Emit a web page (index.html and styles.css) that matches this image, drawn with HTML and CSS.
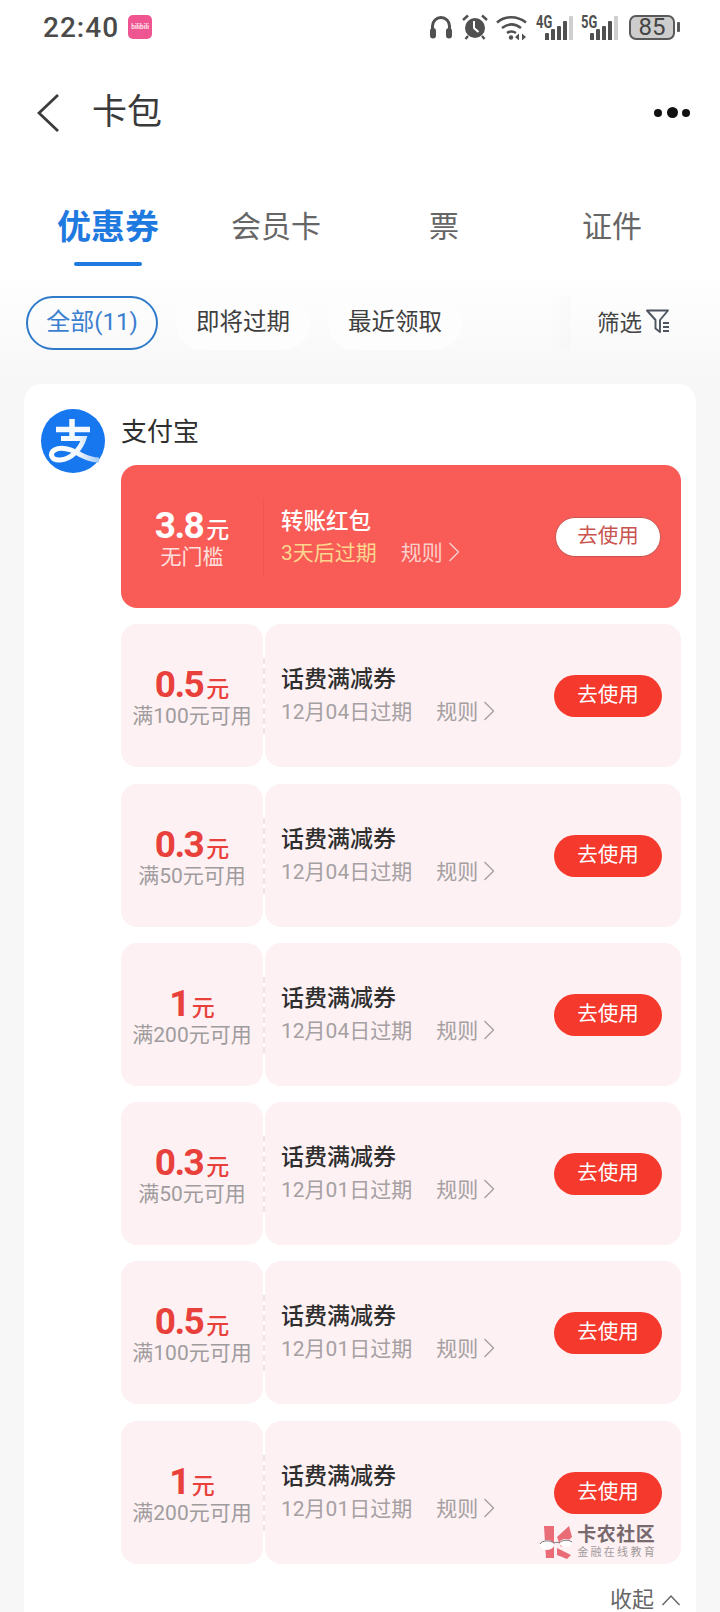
FILE: index.html
```html
<!DOCTYPE html>
<html lang="zh-CN">
<head>
    <meta charset="UTF-8">
    <meta name="viewport" content="width=device-width, initial-scale=1.0">
    <title>卡包</title>
    <link rel="stylesheet" href="styles.css">
</head>
<body>
<div class="page">
    <div class="status-bar">
        <div class="status-left">
            <span class="clock">22:40</span>
            <span class="app-badge">bilibili</span>
        </div>
        <div class="status-right">
            <svg class="st-headphones" viewBox="0 0 24 24">
                <path d="M3.5 15V11a8.5 8.5 0 0 1 17 0v4" fill="none" stroke="#505050" stroke-width="3"/>
                <rect x="1" y="13" width="6" height="10.5" rx="3" fill="#505050"/>
                <rect x="17" y="13" width="6" height="10.5" rx="3" fill="#505050"/>
            </svg>
            <svg class="st-alarm" viewBox="0 0 26 26">
                <circle cx="13" cy="14" r="10" fill="#505050"/>
                <path d="M1 6l5-4.5M25 6l-5-4.5M6 22l-2.5 3M20 22l2.5 3" stroke="#505050" stroke-width="2.4" fill="none"/>
                <path d="M12 7v7l4.5 4" stroke="#fff" stroke-width="2" fill="none"/>
            </svg>
            <svg class="st-wifi" viewBox="0 0 32 26">
                <path d="M1 8.5C9 1.5 21 1.5 30 8.5M6 14c6-4.5 13-4.5 19 0M11 19c3-2 6-2 9 0" fill="none" stroke="#505050" stroke-width="2.6"/>
                <circle cx="15" cy="23.5" r="2.2" fill="#505050"/>
                <path d="M19 23l4-3.5v7zM26 19.5l4 3.5-4 3.5z" fill="#505050"/>
            </svg>
            <div class="signal">
                <span class="net-type">4G</span>
                <i class="bar b1"></i><i class="bar b2"></i><i class="bar b3"></i><i class="bar b4"></i><i class="bar b5"></i>
            </div>
            <div class="signal">
                <span class="net-type">5G</span>
                <i class="bar b1"></i><i class="bar b2"></i><i class="bar b3"></i><i class="bar b4"></i><i class="bar b5"></i>
            </div>
            <div class="battery">
                <div class="battery-body">85</div>
                <div class="battery-tip"></div>
            </div>
        </div>
    </div>

    <div class="nav-bar">
        <div class="nav-left">
            <svg class="back-icon" viewBox="0 0 22 38">
                <path d="M21 1L2 19l19 18" fill="none" stroke="#3c3c3c" stroke-width="2.8"/>
            </svg>
            <span class="nav-title">卡包</span>
        </div>
        <div class="more"><i></i><i class="mid"></i><i></i></div>
    </div>

    <div class="tabs">
        <div class="tab active">优惠券</div>
        <div class="tab">会员卡</div>
        <div class="tab">票</div>
        <div class="tab">证件</div>
    </div>

    <div class="filters">
        <div class="chip selected">全部(11)</div>
        <div class="chip">即将过期</div>
        <div class="chip">最近领取</div>
        <div class="filter-btn">
            <span>筛选</span>
            <svg class="funnel" viewBox="0 0 26 26">
                <path d="M2 2.5h21l-8 9.5v12l-4.5-3.5V12z" fill="none" stroke="#4d5560" stroke-width="1.9" stroke-linejoin="round"/>
                <path d="M18 15h6M18 19h6M18 23h6" stroke="#4d5560" stroke-width="1.8"/>
            </svg>
        </div>
    </div>

    <div class="card">
        <svg class="brand-logo" viewBox="0 0 64 64">
            <defs>
                <linearGradient id="ribbon" gradientUnits="userSpaceOnUse" x1="8" y1="0" x2="60" y2="0">
                    <stop offset="0" stop-color="#ffffff"/>
                    <stop offset="0.55" stop-color="#f2f8ff"/>
                    <stop offset="1" stop-color="#9cc6f5"/>
                </linearGradient>
            </defs>
            <circle cx="32" cy="32" r="32" fill="#1677ee"/>
            <path d="M15 20.5h34M31 10v17" stroke="#f4f9ff" stroke-width="5.5" fill="none"/>
            <path d="M20 29.5h23C40 39 31 50 19 51 10 51.5 8 44 13.5 41 20 37.5 30 40 40 46c6 3 12 5 18 5" fill="none" stroke="url(#ribbon)" stroke-width="5"/>
        </svg>
        <div class="card-main">
            <div class="brand-name">支付宝</div>

            <div class="coupon coupon-red">
                <div class="coupon-value">
                    <div class="amount">3.8<small>元</small></div>
                    <div class="limit">无门槛</div>
                </div>
                <div class="coupon-info">
                    <div class="coupon-title">转账红包</div>
                    <div class="coupon-meta">
                        <span class="expire">3天后过期</span>
                        <span class="rule">规则</span>
                        <svg class="rule-arrow" viewBox="0 0 12 20"><path d="M1.5 1L10.5 10l-9 9" fill="none" stroke="currentColor" stroke-width="1.4"/></svg>
                    </div>
                </div>
                <div class="use-btn">去使用</div>
            </div>

            <div class="coupon">
                <div class="coupon-value">
                    <div class="amount">0.5<small>元</small></div>
                    <div class="limit">满100元可用</div>
                </div>
                <div class="coupon-info">
                    <div class="coupon-title">话费满减券</div>
                    <div class="coupon-meta">
                        <span class="expire">12月04日过期</span>
                        <span class="rule">规则</span>
                        <svg class="rule-arrow" viewBox="0 0 12 20"><path d="M1.5 1L10.5 10l-9 9" fill="none" stroke="currentColor" stroke-width="1.4"/></svg>
                    </div>
                </div>
                <div class="use-btn">去使用</div>
            </div>

            <div class="coupon">
                <div class="coupon-value">
                    <div class="amount">0.3<small>元</small></div>
                    <div class="limit">满50元可用</div>
                </div>
                <div class="coupon-info">
                    <div class="coupon-title">话费满减券</div>
                    <div class="coupon-meta">
                        <span class="expire">12月04日过期</span>
                        <span class="rule">规则</span>
                        <svg class="rule-arrow" viewBox="0 0 12 20"><path d="M1.5 1L10.5 10l-9 9" fill="none" stroke="currentColor" stroke-width="1.4"/></svg>
                    </div>
                </div>
                <div class="use-btn">去使用</div>
            </div>

            <div class="coupon">
                <div class="coupon-value">
                    <div class="amount">1<small>元</small></div>
                    <div class="limit">满200元可用</div>
                </div>
                <div class="coupon-info">
                    <div class="coupon-title">话费满减券</div>
                    <div class="coupon-meta">
                        <span class="expire">12月04日过期</span>
                        <span class="rule">规则</span>
                        <svg class="rule-arrow" viewBox="0 0 12 20"><path d="M1.5 1L10.5 10l-9 9" fill="none" stroke="currentColor" stroke-width="1.4"/></svg>
                    </div>
                </div>
                <div class="use-btn">去使用</div>
            </div>

            <div class="coupon">
                <div class="coupon-value">
                    <div class="amount">0.3<small>元</small></div>
                    <div class="limit">满50元可用</div>
                </div>
                <div class="coupon-info">
                    <div class="coupon-title">话费满减券</div>
                    <div class="coupon-meta">
                        <span class="expire">12月01日过期</span>
                        <span class="rule">规则</span>
                        <svg class="rule-arrow" viewBox="0 0 12 20"><path d="M1.5 1L10.5 10l-9 9" fill="none" stroke="currentColor" stroke-width="1.4"/></svg>
                    </div>
                </div>
                <div class="use-btn">去使用</div>
            </div>

            <div class="coupon">
                <div class="coupon-value">
                    <div class="amount">0.5<small>元</small></div>
                    <div class="limit">满100元可用</div>
                </div>
                <div class="coupon-info">
                    <div class="coupon-title">话费满减券</div>
                    <div class="coupon-meta">
                        <span class="expire">12月01日过期</span>
                        <span class="rule">规则</span>
                        <svg class="rule-arrow" viewBox="0 0 12 20"><path d="M1.5 1L10.5 10l-9 9" fill="none" stroke="currentColor" stroke-width="1.4"/></svg>
                    </div>
                </div>
                <div class="use-btn">去使用</div>
            </div>

            <div class="coupon">
                <div class="coupon-value">
                    <div class="amount">1<small>元</small></div>
                    <div class="limit">满200元可用</div>
                </div>
                <div class="coupon-info">
                    <div class="coupon-title">话费满减券</div>
                    <div class="coupon-meta">
                        <span class="expire">12月01日过期</span>
                        <span class="rule">规则</span>
                        <svg class="rule-arrow" viewBox="0 0 12 20"><path d="M1.5 1L10.5 10l-9 9" fill="none" stroke="currentColor" stroke-width="1.4"/></svg>
                    </div>
                </div>
                <div class="use-btn">去使用</div>
                <div class="watermark">
                    <svg class="watermark-logo" viewBox="0 0 34 34">
                        <path d="M5 1h10v32H7zM18 12L30 1l3 11-11 10zM18 23l14 7-4 4-10-4z" fill="#e96c76"/>
                        <ellipse cx="8" cy="20" rx="7" ry="5" fill="#fff"/>
                        <ellipse cx="26.5" cy="18" rx="6" ry="4" fill="#fff"/>
                        <path d="M1 19c2-4 10-4 14-1 2-1 4-1 5 0 3-3 9-4 13-1" fill="none" stroke="#7c6c70" stroke-width="1"/>
                    </svg>
                    <div class="watermark-text">
                        <div class="wm-name">卡农社区</div>
                        <div class="wm-slogan">金融在线教育</div>
                    </div>
                </div>
            </div>

            <div class="collapse">
                <span>收起</span>
                <svg class="collapse-arrow" viewBox="0 0 20 12"><path d="M1.5 11L10 2l8.5 9" fill="none" stroke="#666" stroke-width="1.5"/></svg>
            </div>
        </div>
    </div>
</div>
</body>
</html>
```

FILE: styles.css
```css
* {
    margin: 0;
    padding: 0;
    box-sizing: border-box;
}

body {
    font-family: Roboto, 'Noto Sans CJK SC', sans-serif;
    background: #f6f6f7;
}

.page {
    width: 720px;
    height: 1612px;
    overflow: hidden;
    background: linear-gradient(180deg, #ffffff 0, #ffffff 270px, #f7f7f8 384px);
}

/* status bar */
.status-bar {
    height: 55px;
    padding: 12px 40px 0 43px;
    display: flex;
    justify-content: space-between;
    align-items: flex-start;
}

.status-left {
    display: flex;
    align-items: center;
    gap: 9px;
    height: 30px;
}

.clock {
    font-size: 28px;
    font-weight: 500;
    letter-spacing: 1px;
    color: #4a4a4a;
}

.app-badge {
    width: 24px;
    height: 24px;
    border-radius: 5px;
    background: #ef5590;
    color: #ffe6ef;
    font-size: 6.5px;
    font-weight: 700;
    line-height: 24px;
    text-align: center;
    overflow: hidden;
}

.status-right {
    display: flex;
    align-items: center;
    height: 30px;
}

.st-headphones {
    width: 24px;
    height: 24px;
    margin-right: 9px;
}

.st-alarm {
    width: 26px;
    height: 26px;
    margin-right: 8px;
}

.st-wifi {
    width: 32px;
    height: 26px;
    margin-right: 8px;
}

.signal {
    position: relative;
    width: 37px;
    height: 25px;
    margin-right: 8px;
    display: flex;
    align-items: flex-end;
    justify-content: flex-end;
    gap: 1.5px;
}

.net-type {
    position: absolute;
    left: 0;
    top: -2px;
    font-size: 18px;
    line-height: 18px;
    font-weight: 700;
    color: #505050;
    transform: scaleX(0.72);
    transform-origin: left top;
}

.bar {
    display: block;
    width: 4.5px;
    border-radius: 1px 1px 0 0;
    background: #505050;
}

.b1 { height: 7px; }
.b2 { height: 11px; }
.b3 { height: 14px; }
.b4 { height: 19px; }
.b5 { height: 24px; background: #cfcfcf; }

.battery {
    display: flex;
    align-items: center;
    gap: 2px;
    margin-left: 3px;
}

.battery-body {
    width: 46px;
    height: 25px;
    border: 2px solid #5a5a5a;
    border-radius: 7px;
    background: #cdcdcd;
    color: #454545;
    font-size: 24px;
    line-height: 21px;
    text-align: center;
}

.battery-tip {
    width: 3px;
    height: 10px;
    background: #5a5a5a;
    border-radius: 1px;
}

/* nav bar */
.nav-bar {
    height: 115px;
    padding: 0 30px 0 37px;
    display: flex;
    justify-content: space-between;
    align-items: flex-start;
}

.nav-left {
    display: flex;
    align-items: center;
    gap: 33px;
    padding-top: 38px;
}

.back-icon {
    width: 22px;
    height: 38px;
}

.nav-title {
    font-size: 35px;
    line-height: 40px;
    color: #3a3a3a;
}

.more {
    display: flex;
    align-items: center;
    gap: 4.5px;
    padding-top: 52px;
}

.more i {
    display: block;
    width: 8px;
    height: 8px;
    border-radius: 50%;
    background: #111;
}

.more i.mid {
    width: 11px;
    height: 11px;
}

/* tabs */
.tabs {
    height: 98px;
    padding: 0 24px;
    display: grid;
    grid-template-columns: repeat(4, 168px);
}

.tab {
    position: relative;
    height: 98px;
    padding-top: 35px;
    font-size: 30px;
    line-height: 44px;
    text-align: center;
    color: #666;
}

.tab.active {
    font-size: 34px;
    font-weight: 700;
    color: #1f7ae0;
}

.tab.active::after {
    content: '';
    position: absolute;
    left: 50px;
    bottom: 2px;
    width: 68px;
    height: 4px;
    border-radius: 2px;
    background: #1f7ae0;
}

/* filter chips */
.filters {
    margin-top: 28px;
    height: 54px;
    padding-left: 26px;
    display: flex;
    align-items: center;
    gap: 18px;
}

.chip {
    height: 54px;
    padding: 0 20px;
    border-radius: 27px;
    background: #fdfdfd;
    font-size: 23.5px;
    line-height: 52px;
    color: #3f3f3f;
}

.chip.selected {
    width: 132px;
    padding: 0;
    border: 2px solid #2f7bc9;
    line-height: 48px;
    text-align: center;
    color: #3a7fd0;
    font-size: 24px;
    background: transparent;
}

.filter-btn {
    position: relative;
    width: 150px;
    height: 54px;
    margin-left: auto;
    padding: 0 0 4px 27px;
    display: flex;
    align-items: center;
    gap: 3px;
    font-size: 22.5px;
    color: #444;
}

.filter-btn::before {
    content: '';
    position: absolute;
    left: -22px;
    top: 0;
    width: 22px;
    height: 54px;
    background: linear-gradient(90deg, rgba(0, 0, 0, 0), rgba(0, 0, 0, 0.012));
}

.funnel {
    width: 26px;
    height: 26px;
}

/* coupon card */
.card {
    margin: 34px 24px 0;
    padding: 25px 15px 0 17px;
    background: #fff;
    border-radius: 18px 18px 0 0;
    display: flex;
    align-items: flex-start;
    gap: 16px;
}

.brand-logo {
    width: 64px;
    height: 64px;
    flex-shrink: 0;
}

.card-main {
    width: 560px;
}

.brand-name {
    height: 48px;
    margin-bottom: 8px;
    font-size: 26px;
    line-height: 46px;
    color: #2e2e2e;
}

.coupon {
    position: relative;
    height: 143px;
    margin-bottom: 16.3px;
    display: flex;
    align-items: center;
    color: #2e2e2e;
}

.coupon-value {
    width: 142px;
    height: 143px;
    border-radius: 16px;
    background: #fdf1f3;
    display: flex;
    flex-direction: column;
    justify-content: center;
    align-items: center;
}

.amount {
    margin-top: 2px;
    font-size: 37px;
    line-height: 38px;
    font-weight: 700;
    letter-spacing: -1.5px;
    color: #e8413b;
}

.amount small {
    margin-left: 3px;
    font-size: 23px;
    font-weight: 500;
    letter-spacing: 0;
}

.limit {
    margin-top: -4px;
    font-size: 21px;
    line-height: 22px;
    color: #a09c9e;
}

.coupon-info {
    position: relative;
    width: 416px;
    height: 143px;
    margin-left: 2px;
    padding: 40px 0 0 16px;
    border-radius: 16px;
    background: #fdf1f3;
}

.coupon-info::before {
    content: '';
    position: absolute;
    left: -2px;
    top: 34px;
    height: 76px;
    border-left: 2px dashed #efe2e4;
}

.coupon-title {
    font-size: 23px;
    line-height: 32px;
    font-weight: 500;
}

.coupon-meta {
    margin-top: -2px;
    display: flex;
    align-items: center;
    height: 32px;
    font-size: 21px;
    color: #a5a0a2;
}

.rule {
    margin-left: 24px;
}

.rule-arrow {
    width: 12px;
    height: 20px;
    margin-left: 5px;
    margin-top: 2px;
}

.use-btn {
    position: absolute;
    right: 19px;
    top: 51px;
    width: 108px;
    height: 42px;
    border-radius: 21px;
    background: #f5392d;
    color: #fff;
    font-size: 20.5px;
    line-height: 41px;
    text-align: center;
}

/* highlighted red packet */
.coupon-red {
    border-radius: 16px;
    background: #f95c57;
}

.coupon-red .coupon-value,
.coupon-red .coupon-info {
    background: none;
}

.coupon-red .coupon-info::before {
    top: 33px;
    height: 78px;
    border-left: 1px solid #ee5651;
}

.coupon-red .amount {
    color: #fff;
}

.coupon-red .limit {
    color: #fde0de;
}

.coupon-red .coupon-title {
    color: #fff;
    font-size: 22.5px;
}

.coupon-red .coupon-meta {
    color: #f9cfcb;
}

.coupon-red .expire {
    color: #fbd68e;
}

.coupon-red .use-btn {
    top: 52px;
    right: 20px;
    width: 106px;
    height: 40px;
    line-height: 36px;
    border: 1px solid #c9544f;
    background: #fff;
    color: #c9544f;
}

/* forum watermark, sits over the last ticket */
.watermark {
    position: absolute;
    right: 24px;
    top: 104px;
    display: flex;
    align-items: flex-start;
    gap: 4px;
}

.watermark-logo {
    width: 34px;
    height: 34px;
}

.wm-name {
    font-size: 19px;
    line-height: 20px;
    font-weight: 700;
    letter-spacing: 0.5px;
    color: #77696d;
}

.wm-slogan {
    font-size: 11px;
    line-height: 15px;
    letter-spacing: 2.3px;
    color: #a29a9c;
}

.collapse {
    margin-top: 24px;
    display: flex;
    justify-content: flex-end;
    align-items: center;
    gap: 7px;
    font-size: 22px;
    line-height: 24px;
    color: #666;
}

.collapse-arrow {
    width: 20px;
    height: 12px;
}
```
